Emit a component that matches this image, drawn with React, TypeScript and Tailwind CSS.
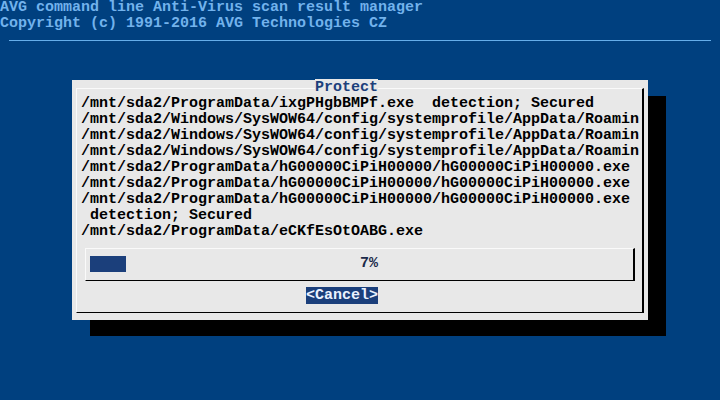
import React from 'react';

const lines = [
  '/mnt/sda2/ProgramData/ixgPHgbBMPf.exe  detection; Secured',
  '/mnt/sda2/Windows/SysWOW64/config/systemprofile/AppData/Roamin',
  '/mnt/sda2/Windows/SysWOW64/config/systemprofile/AppData/Roamin',
  '/mnt/sda2/Windows/SysWOW64/config/systemprofile/AppData/Roamin',
  '/mnt/sda2/ProgramData/hG00000CiPiH00000/hG00000CiPiH00000.exe',
  '/mnt/sda2/ProgramData/hG00000CiPiH00000/hG00000CiPiH00000.exe',
  '/mnt/sda2/ProgramData/hG00000CiPiH00000/hG00000CiPiH00000.exe',
  ' detection; Secured',
  '/mnt/sda2/ProgramData/eCKfEsOtOABG.exe',
];

const App: React.FC = () => {
  return (
    <div className="w-[720px] h-[400px] overflow-hidden bg-[#00407f] font-['Liberation_Mono',monospace] font-bold text-[15px] leading-[16px] whitespace-pre">
      {/* BACKTITLE */}
      <div className="text-[#72b2ec]">
        <div className="h-4">AVG command line Anti-Virus scan result manager</div>
        <div className="h-4">Copyright (c) 1991-2016 AVG Technologies CZ</div>
      </div>
      <div className="h-4 flex items-center px-[9px]">
        <div className="h-px w-full bg-[#66aeea]"></div>
      </div>
      <div className="h-8"></div>

      {/* GAUGE DIALOG */}
      <div className="ml-[72px] w-[576px] h-[240px] bg-[#e8e8e8] shadow-[18px_16px_0_0_#000] pt-2 pb-[7px] pl-1 pr-1">
        <div className="h-full border-t border-l border-t-[#fafafa] border-l-[#fafafa] border-r-2 border-r-black border-b border-b-black">
          <div className="-mt-[9px] h-4 pl-[238px] text-[#1c3f7b]">
            <span className="bg-[#e8e8e8]">Protect</span>
          </div>
          <div className="pl-1 text-black">
            {lines.map((l, i) => (
              <div key={i} className="h-4">{l}</div>
            ))}
          </div>

          {/* progress box */}
          <div className="mt-2 ml-2 w-[550px] border-t border-l border-t-[#fafafa] border-l-[#fafafa] border-r-2 border-r-black border-b border-b-black pt-[7px] pb-2 pl-1">
            <div className="h-4 flex items-center">
              <div className="w-[36px] h-4 bg-[#1b3f7b]"></div>
              <span className="ml-[234px] text-[#1a2a4a]">7%</span>
            </div>
          </div>

          <div className="mt-[7px] h-4 pl-[229px]">
            <span className="bg-[#1b3f7b] text-[#eaf2ff]">&lt;Cancel&gt;</span>
          </div>
        </div>
      </div>
    </div>
  );
};

export default App;
